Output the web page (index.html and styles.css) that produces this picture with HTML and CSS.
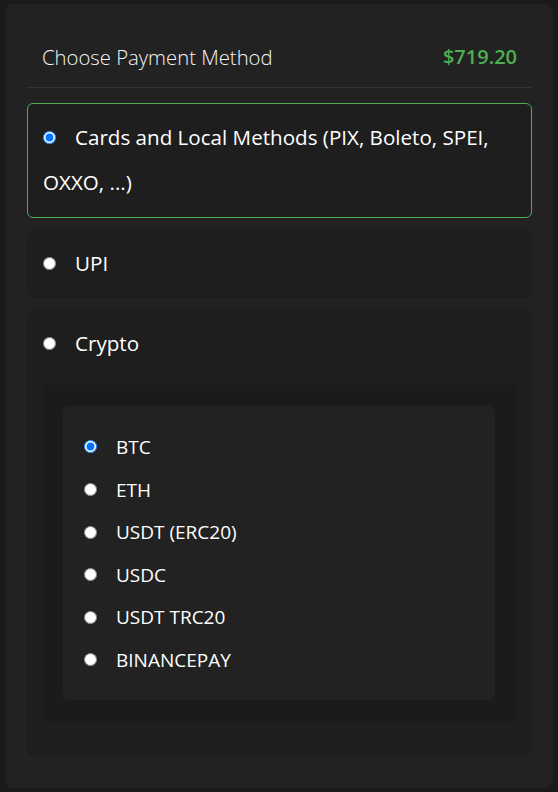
FILE: index.html
```html
<!DOCTYPE html>
<html lang="en">
<head>
<meta charset="utf-8">
<title>Choose Payment Method</title>
<link rel="stylesheet" href="styles.css">
</head>
<body>
<div class="panel">
  <div class="header">
    <span class="title">Choose Payment Method</span>
    <span class="price">$719.20</span>
  </div>
  <div class="option selected">
    <label class="opt-label"><input type="radio" name="method" class="radio" checked><span class="opt-text">Cards and Local Methods (PIX, Boleto, SPEI, OXXO, ...)</span></label>
  </div>
  <div class="option">
    <label class="opt-label"><input type="radio" name="method" class="radio"><span class="opt-text">UPI</span></label>
  </div>
  <div class="option">
    <label class="opt-label"><input type="radio" name="method" class="radio"><span class="opt-text">Crypto</span></label>
    <div class="sub-area">
      <div class="sub-card">
        <label class="coin"><input type="radio" name="coin" class="radio" checked><span class="coin-text">BTC</span></label>
        <label class="coin"><input type="radio" name="coin" class="radio"><span class="coin-text">ETH</span></label>
        <label class="coin"><input type="radio" name="coin" class="radio"><span class="coin-text">USDT (ERC20)</span></label>
        <label class="coin"><input type="radio" name="coin" class="radio"><span class="coin-text">USDC</span></label>
        <label class="coin"><input type="radio" name="coin" class="radio"><span class="coin-text">USDT TRC20</span></label>
        <label class="coin"><input type="radio" name="coin" class="radio"><span class="coin-text">BINANCEPAY</span></label>
      </div>
    </div>
  </div>
</div>
</body>
</html>
```
FILE: styles.css
```css
html, body {
  margin: 0;
  padding: 0;
  background: #1a1a1a;
}
body {
  padding: 4px 5px;
  font-family: "Open Sans", "Noto Sans", sans-serif;
  color: #ffffff;
}
.panel {
  background: #222222;
  border-radius: 8px;
  padding: 22px 21px 32px 22px;
  box-sizing: border-box;
  height: 784px;
}
.header {
  display: flex;
  justify-content: space-between;
  align-items: center;
  padding: 16px 15px 15px;
  border-bottom: 1px solid #333333;
  line-height: 30px;
}
.title {
  font-size: 20.3px;
  font-weight: 300;
  color: #f5f5f5;
}
.price {
  font-size: 20px;
  font-weight: 600;
  color: #4caf50;
}
.option {
  margin-top: 15px;
  background: #1e1e1e;
  border: 1px solid transparent;
  border-radius: 6px;
  padding: 11px 15px;
}
.option + .option {
  margin-top: 11px;
}
.option.selected {
  border-color: #4caf50;
  padding-bottom: 12px;
}
.opt-label {
  display: block;
  font-size: 20.6px;
  line-height: 45px;
}
.radio {
  margin: 0 19px 0 0;
  width: 13px;
  height: 13px;
  vertical-align: middle;
  position: relative;
  top: -2px;
}
.sub-area {
  background: #1b1b1b;
  margin: 19px 0 22px;
  padding: 21px 21px 22px 20px;
}
.sub-card {
  background: #222222;
  border-radius: 6px;
  padding: 20px 21px 18px;
}
.coin {
  display: block;
  font-size: 19px;
  line-height: 42.6px;
}
```
